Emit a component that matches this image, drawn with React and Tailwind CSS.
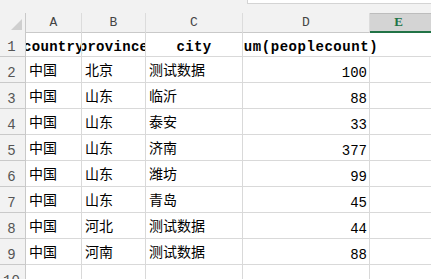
import React from "react";

const rows = [
  ["中国", "北京", "测试数据", "100"],
  ["中国", "山东", "临沂", "88"],
  ["中国", "山东", "泰安", "33"],
  ["中国", "山东", "济南", "377"],
  ["中国", "山东", "潍坊", "99"],
  ["中国", "山东", "青岛", "45"],
  ["中国", "河北", "测试数据", "44"],
  ["中国", "河南", "测试数据", "88"],
];

const cols = "grid grid-cols-[26px_56px_64px_97px_127px_1fr]";
const mono = "font-['Liberation_Mono',monospace]";
const cjk = "font-['Noto_Sans_CJK_SC',sans-serif]";

const RowHead = ({ n }) => (
  <div className={`flex items-end justify-center pb-[1px] pr-[2px] bg-[#f2f2f2] border-r border-b border-[#c9c9c9] text-[14px] leading-4 text-[#555] ${mono}`}>
    {n}
  </div>
);

const TextCell = ({ children }) => (
  <div className={`flex items-center pl-[3px] border-r border-b border-[#d9d9d9] text-[14px] text-black whitespace-nowrap overflow-hidden ${cjk}`}>
    {children}
  </div>
);

export default function App() {
  return (
    <div className="w-[431px] h-[279px] overflow-hidden bg-white">
      {/* top strip with formula bar edge */}
      <div className="h-[13px] bg-[#f2f2f2] flex">
        <div className="ml-[247px] flex-1 h-[4px] bg-white border-b border-l border-[#d4d4d4]" />
      </div>

      {/* column headers */}
      <div className={`${cols} h-[18px]`}>
        <div className="bg-[#f2f2f2] border-r border-b border-[#c9c9c9] flex items-end justify-end pr-[3px] pb-[2px]">
          <svg width="11" height="11" viewBox="0 0 11 11">
            <polygon points="11,0 11,11 0,11" fill="#cfcfcf" />
          </svg>
        </div>
        {["A", "B", "C", "D"].map(c => (
          <div key={c} className={`flex items-end justify-center pb-[1px] bg-[#f2f2f2] border-r border-b border-r-[#dcdcdc] border-b-[#c9c9c9] text-[13px] leading-4 text-[#444] ${mono}`}>
            {c}
          </div>
        ))}
        <div className={`flex items-end justify-center pb-[1px] pr-[4px] bg-[#d4d4d4] border-t border-t-[#bdbdbd] border-b-2 border-b-[#217346] text-[13px] leading-4 font-bold text-[#217346] font-['Liberation_Serif',serif]`}>
          E
        </div>
      </div>

      {/* row 1: header labels */}
      <div className={`${cols} h-[26px]`}>
        <RowHead n={1} />
        <div className={`flex items-end justify-center pb-[1px] border-r border-b border-[#d9d9d9] overflow-hidden whitespace-nowrap text-[14px] leading-4 font-bold tracking-[0.3px] ${mono}`}>
          country
        </div>
        <div className={`flex items-end justify-center pb-[1px] border-r border-b border-[#d9d9d9] overflow-hidden whitespace-nowrap text-[14px] leading-4 font-bold tracking-[0.3px] ${mono}`}>
          province
        </div>
        <div className={`flex items-end justify-center pb-[1px] border-r border-b border-[#d9d9d9] overflow-hidden whitespace-nowrap text-[14px] leading-4 font-bold tracking-[0.3px] ${mono}`}>
          city
        </div>
        <div className={`relative z-10 flex items-end justify-center pb-[1px] border-b border-[#d9d9d9] whitespace-nowrap text-[14px] leading-4 font-bold tracking-[0.55px] [clip-path:inset(0_-200px_0_0)] ${mono}`}>
          sum(peoplecount)
        </div>
        <div className="border-b border-[#d9d9d9]" />
      </div>

      {rows.map((r, i) => (
        <div key={i} className={`${cols} h-[26px]`}>
          <RowHead n={i + 2} />
          <TextCell>{r[0]}</TextCell>
          <TextCell>{r[1]}</TextCell>
          <TextCell>{r[2]}</TextCell>
          <div className={`flex items-end justify-end pr-[2px] pb-[1px] border-r border-b border-[#d9d9d9] text-[14px] leading-4 text-black ${mono}`}>
            {r[3]}
          </div>
          <div className="border-b border-[#d9d9d9]" />
        </div>
      ))}

      <div className={`${cols} h-[26px]`}>
        <RowHead n={10} />
        <div className="border-r border-[#d9d9d9]" />
        <div className="border-r border-[#d9d9d9]" />
        <div className="border-r border-[#d9d9d9]" />
        <div className="border-r border-[#d9d9d9]" />
        <div />
      </div>
    </div>
  );
}
